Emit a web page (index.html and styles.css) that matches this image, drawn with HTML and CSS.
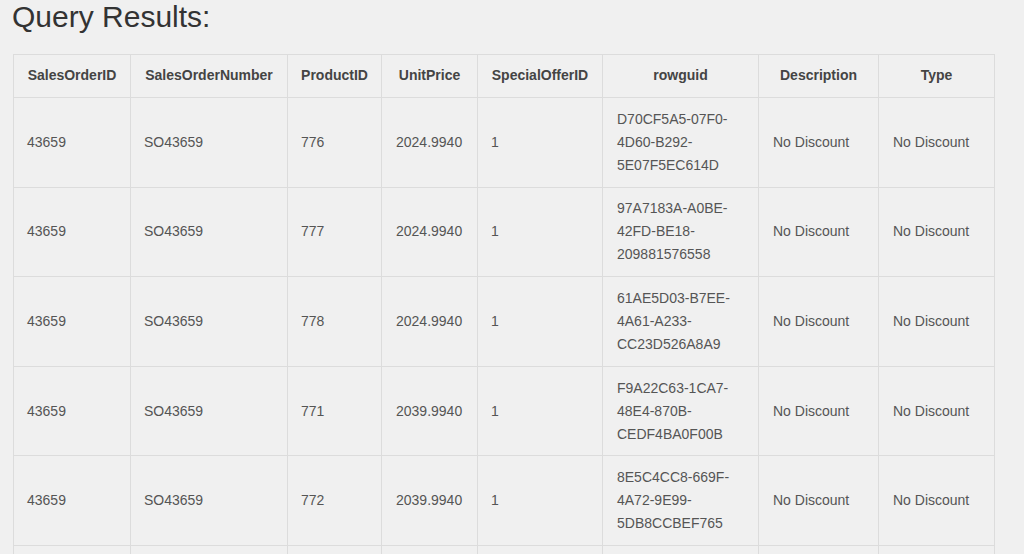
FILE: index.html
```html
<!DOCTYPE html>
<html>
<head>
<meta charset="utf-8">
<link rel="stylesheet" href="styles.css">
</head>
<body>
<h1 class="title">Query Results:</h1>
<table class="results">
  <colgroup>
    <col class="c1"><col class="c2"><col class="c3"><col class="c4"><col class="c5"><col class="c6"><col class="c7"><col class="c8">
  </colgroup>
  <thead>
    <tr><th>SalesOrderID</th><th>SalesOrderNumber</th><th>ProductID</th><th>UnitPrice</th><th>SpecialOfferID</th><th>rowguid</th><th>Description</th><th>Type</th></tr>
  </thead>
  <tbody>
    <tr><td>43659</td><td>SO43659</td><td>776</td><td class="wide">2024.9940</td><td>1</td><td class="wide">D70CF5A5-07F0-4D60-B292-5E07F5EC614D</td><td class="wide">No Discount</td><td class="wide">No Discount</td></tr>
    <tr><td>43659</td><td>SO43659</td><td>777</td><td class="wide">2024.9940</td><td>1</td><td class="wide">97A7183A-A0BE-42FD-BE18-209881576558</td><td class="wide">No Discount</td><td class="wide">No Discount</td></tr>
    <tr><td>43659</td><td>SO43659</td><td>778</td><td class="wide">2024.9940</td><td>1</td><td class="wide">61AE5D03-B7EE-4A61-A233-CC23D526A8A9</td><td class="wide">No Discount</td><td class="wide">No Discount</td></tr>
    <tr><td>43659</td><td>SO43659</td><td>771</td><td class="wide">2039.9940</td><td>1</td><td class="wide">F9A22C63-1CA7-48E4-870B-CEDF4BA0F00B</td><td class="wide">No Discount</td><td class="wide">No Discount</td></tr>
    <tr><td>43659</td><td>SO43659</td><td>772</td><td class="wide">2039.9940</td><td>1</td><td class="wide">8E5C4CC8-669F-4A72-9E99-5DB8CCBEF765</td><td class="wide">No Discount</td><td class="wide">No Discount</td></tr>
    <tr class="partial"><td></td><td></td><td></td><td></td><td></td><td></td><td></td><td></td></tr>
  </tbody>
</table>
</body>
</html>
```
FILE: styles.css
```css
html, body {
  margin: 0;
  padding: 0;
  background: #f0f0f0;
}
body {
  font-family: "Liberation Sans", Arial, sans-serif;
  color: #555;
  padding: 0 0 0 13px;
}
.title {
  margin: 0 0 0 -1px;
  font-size: 30px;
  font-weight: normal;
  line-height: 34px;
  color: #333;
  height: 54px;
}
.results {
  border-collapse: collapse;
  table-layout: fixed;
  width: 981px;
  font-size: 14px;
  line-height: 23px;
}
.c1 { width: 117px; }
.c2 { width: 157px; }
.c3 { width: 94px; }
.c4 { width: 96px; }
.c5 { width: 125px; }
.c6 { width: 156px; }
.c7 { width: 120px; }
.c8 { width: 116px; }
.results th,
.results td {
  border: 1px solid #dcdcdc;
  vertical-align: middle;
}
.results th {
  font-weight: bold;
  color: #444;
  text-align: center;
  padding: 9px 8px 10px;
}
.results td {
  text-align: left;
  padding: 9.8px 13px;
}
.results td.wide {
  padding-left: 14px;
}
.results .partial td {
  height: 69px;
}
```
